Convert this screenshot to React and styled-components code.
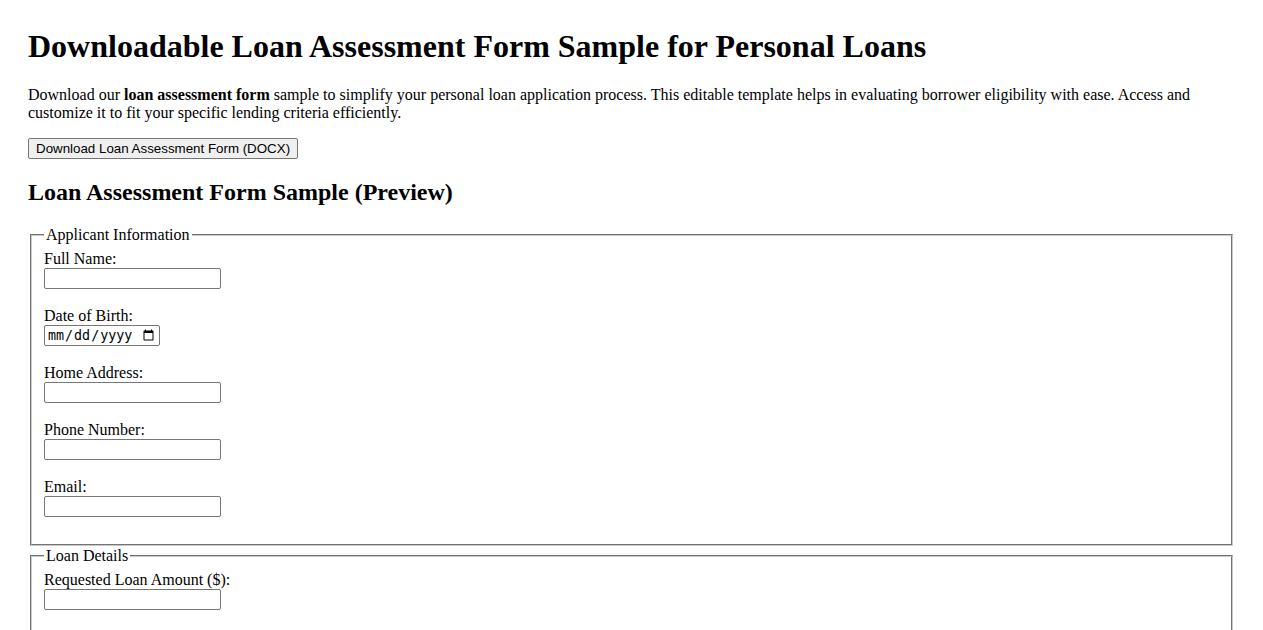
import React from "react";
import styled, { createGlobalStyle } from "styled-components";

const GlobalStyle = createGlobalStyle`
  html, body {
    margin: 0;
    padding: 0;
    background: #ffffff;
  }
  body {
    padding: 28px 28px 40px;
    font-family: "Liberation Serif", "Times New Roman", serif;
    font-size: 16px;
    color: #000000;
  }
`;

const applicant = [
  { id: "fullName", label: "Full Name:", type: "text" },
  { id: "dob", label: "Date of Birth:", type: "date" },
  { id: "address", label: "Home Address:", type: "text" },
  { id: "phone", label: "Phone Number:", type: "tel" },
  { id: "email", label: "Email:", type: "email" },
];

const loan = [
  { id: "amount", label: "Requested Loan Amount ($):", type: "number" },
  { id: "purpose", label: "Loan Purpose:", type: "text" },
  { id: "term", label: "Loan Term (months):", type: "number" },
];

const FormSection = ({ title, fields }) => (
  <Fieldset>
    <Legend>{title}</Legend>
    {fields.map((f) => (
      <Field key={f.id}>
        <Label htmlFor={f.id}>{f.label}</Label>
        <Input id={f.id} name={f.id} type={f.type} $date={f.type === "date"} />
      </Field>
    ))}
  </Fieldset>
);

const App = () => {
  return (
    <>
      <GlobalStyle />
      <Title>Downloadable Loan Assessment Form Sample for Personal Loans</Title>
      <Intro>
        Download our <strong>loan assessment form</strong> sample to simplify your personal loan
        application process. This editable template helps in evaluating borrower eligibility with
        ease. Access and customize it to fit your specific lending criteria efficiently.
      </Intro>
      <DownloadButton type="button">Download Loan Assessment Form (DOCX)</DownloadButton>
      <Subtitle>Loan Assessment Form Sample (Preview)</Subtitle>
      <form>
        <FormSection title="Applicant Information" fields={applicant} />
        <FormSection title="Loan Details" fields={loan} />
      </form>
    </>
  );
};

export default App;

const Title = styled.h1`
  font-size: 32px;
  font-weight: bold;
  margin: 0 0 21.44px;
`;

const Intro = styled.p`
  margin: 0 0 16px;
  line-height: normal;
`;

const DownloadButton = styled.button`
  font-family: "Liberation Sans", Arial, sans-serif;
  font-size: 13.333px;
  color: #000000;
  background: #efefef;
  border: 1px solid #767676;
  border-radius: 2px;
  padding: 1px 7px;
  height: 21px;
  cursor: pointer;
`;

const Subtitle = styled.h2`
  font-size: 24px;
  font-weight: bold;
  margin: 19.92px 0;
`;

const Fieldset = styled.fieldset`
  margin: 0 2px;
  padding: 5.6px 12px 8.5px;
  border: 2px groove rgb(200, 200, 200);
  min-width: min-content;

  & + & {
    margin-top: 1.5px;
  }
`;

const Legend = styled.legend`
  padding: 0 2px;
`;

const Field = styled.div`
  margin-bottom: 18.1px;
`;

const Label = styled.label`
  display: block;
`;

const Input = styled.input`
  display: block;
  box-sizing: border-box;
  width: ${(p) => (p.$date ? "116px" : "177px")};
  height: 21px;
  margin: 0;
  padding: 1px 2px;
  border: 1px solid #767676;
  border-radius: 2px;
  background: #ffffff;
  font-size: 13.333px;
`;
